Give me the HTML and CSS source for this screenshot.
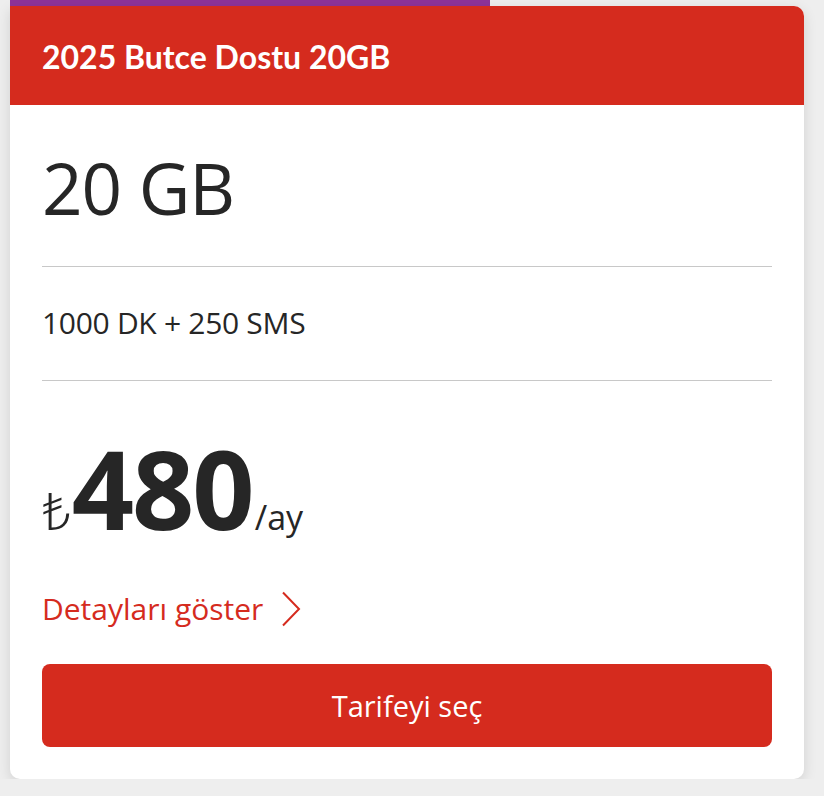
FILE: index.html
```html
<!DOCTYPE html>
<html><head><meta charset="utf-8">
 <title>Tarife</title>
 <link rel="stylesheet" href="styles.css">
</head>
<body>
   <div class="page">
      <div class="tab-strip"></div>
      <div class="plan-card">
         <div class="plan-header">2025 Butce Dostu 20GB</div>
         <div class="plan-body">
            <div class="plan-data">20 GB</div>
            <div class="plan-extras">1000 DK + 250 SMS</div>
            <div class="plan-price">
               <span class="currency">₺</span><span class="amount">480</span><span class="period">/ay</span>
            </div>
            <a class="details-link" href="#">Detayları göster
               <svg class="chevron" width="20" height="36" viewBox="0 0 20 36"><path d="M2 1.5 L18 18 L2 34.5" fill="none" stroke="#d52b1e" stroke-width="2"/></svg>
            </a>
            <button class="select-btn">Tarifeyi seç</button>
         </div>
      </div>
   </div>
</body></html>
```

FILE: styles.css
```css
body {
  padding: 0;
  margin: 0;
  background: #eeeeee;
  font-family: "Open Sans", "Noto Sans", sans-serif;
  color: #262626;
}
.page {
  padding: 0 20px 0 10px;
}
.tab-strip {
  width: 480px;
  height: 6px;
  background: #8e3399;
}
.plan-card {
  background: #fff;
  border-radius: 0 10px 10px 10px;
  box-shadow: 0 4px 14px rgba(0, 0, 0, 0.12);
  overflow: hidden;
}
.plan-header {
  background: #d52b1e;
  color: #fff;
  height: 99px;
  box-sizing: border-box;
  padding: 33px 32px 0;
  font-family: "Lato", sans-serif;
  font-weight: bold;
  font-size: 32px;
  line-height: 36px;
}
.plan-body {
  padding: 0 32px 32px;
}
.plan-data {
  font-size: 71px;
  line-height: 70px;
  padding: 48px 0 43px;
  border-bottom: 1px solid #c8c8c8;
  letter-spacing: -1px;
}
.plan-extras {
  font-size: 30px;
  line-height: 34px;
  padding: 39px 0 40px;
  border-bottom: 1px solid #c8c8c8;
  letter-spacing: -0.3px;
}
.plan-price {
  display: flex;
  align-items: baseline;
  padding-top: 52px;
}
.currency {
  font-size: 52px;
  font-weight: 300;
}
.amount {
  font-size: 109px;
  line-height: 110px;
  font-weight: bold;
  letter-spacing: -2px;
}
.period {
  font-size: 34px;
  margin-left: 2px;
}
.details-link {
  display: flex;
  align-items: center;
  gap: 18px;
  margin-top: 44px;
  color: #d52b1e;
  font-size: 30px;
  line-height: 40px;
  text-decoration: none;
}
.select-btn {
  display: block;
  width: 100%;
  height: 83px;
  margin-top: 35px;
  border: 0;
  border-radius: 8px;
  background: #d52b1e;
  color: #fff;
  font-family: "Open Sans", "Noto Sans", sans-serif;
  font-size: 29px;
}
```
